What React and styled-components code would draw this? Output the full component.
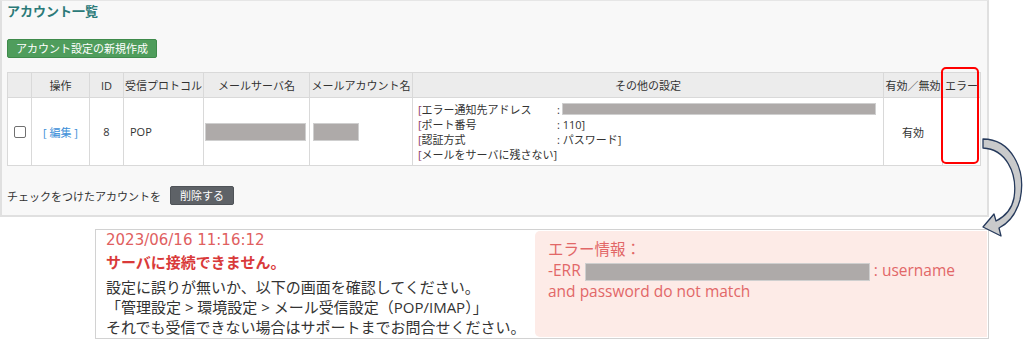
import styled, { createGlobalStyle } from 'styled-components'

// アカウント一覧のエラー表示を説明する画面
const GlobalStyle = createGlobalStyle`
    body {
        margin: 0;
        background: #ffffff;
        font-family: "Open Sans", "Noto Sans CJK JP", sans-serif;
        color: #333333;
    }
`

const columns = [
    { label: '', width: 24 },
    { label: '操作', width: 58 },
    { label: 'ID', width: 34 },
    { label: '受信プロトコル', width: 80 },
    { label: 'メールサーバ名', width: 106 },
    { label: 'メールアカウント名', width: 103 },
    { label: 'その他の設定', width: 471 },
    { label: '有効／無効', width: 59 },
    { label: 'エラー', width: 38 },
]

// value が null のときは伏せ字のバーを出す
const settings = [
    { label: 'エラー通知先アドレス', value: null },
    { label: 'ポート番号', value: '110]' },
    { label: '認証方式', value: 'パスワード]' },
]

const App = () => {
    return (
        <StyledPage>
            <GlobalStyle />
            <StyledPanel>
                <StyledTitle>アカウント一覧</StyledTitle>
                <StyledButton $tone="green">アカウント設定の新規作成</StyledButton>
                <StyledTableWrap>
                    <StyledTable>
                        <colgroup>
                            {columns.map((c, i) => (
                                <col key={i} style={{ width: c.width }} />
                            ))}
                        </colgroup>
                        <thead>
                            <tr>
                                {columns.map((c, i) => (
                                    <StyledTh key={i}>{c.label}</StyledTh>
                                ))}
                            </tr>
                        </thead>
                        <tbody>
                            <tr>
                                <StyledTd $align="center">
                                    <StyledCheck type="checkbox" />
                                </StyledTd>
                                <StyledTd $align="center">
                                    <StyledLink>[ 編集 ]</StyledLink>
                                </StyledTd>
                                <StyledTd $align="center">8</StyledTd>
                                <StyledTd $pad="6px">POP</StyledTd>
                                <StyledTd $pad="1px">
                                    <StyledMask $w={101} $h={18} />
                                </StyledTd>
                                <StyledTd $pad="3px">
                                    <StyledMask $w={46} $h={18} />
                                </StyledTd>
                                <StyledTd $pad="5px">
                                    <StyledSettings>
                                        {settings.map((s, i) => (
                                            <StyledSettingRow key={i}>
                                                <span><StyledBracket>[</StyledBracket>{s.label}</span>
                                                <StyledValue>
                                                    : {s.value === null ? <StyledMask $w={314} $h={12} /> : s.value}
                                                </StyledValue>
                                            </StyledSettingRow>
                                        ))}
                                        <div><StyledBracket>[</StyledBracket>メールをサーバに残さない]</div>
                                    </StyledSettings>
                                </StyledTd>
                                <StyledTd $align="center">有効</StyledTd>
                                <StyledTd />
                            </tr>
                        </tbody>
                    </StyledTable>
                    <StyledHighlight />
                </StyledTableWrap>
                <StyledFooter>
                    <span>チェックをつけたアカウントを</span>
                    <StyledButton $tone="grey">削除する</StyledButton>
                </StyledFooter>
            </StyledPanel>

            <StyledErrorBox>
                <StyledErrorMain>
                    <StyledDate>2023/06/16 11:16:12</StyledDate>
                    <StyledErrorTitle>サーバに接続できません。</StyledErrorTitle>
                    <StyledMessage>
                        設定に誤りが無いか、以下の画面を確認してください。<br />
                        「管理設定 &gt; 環境設定 &gt; メール受信設定（POP/IMAP）」<br />
                        それでも受信できない場合はサポートまでお問合せください。
                    </StyledMessage>
                </StyledErrorMain>
                <StyledErrorInfo>
                    エラー情報：<br />
                    -ERR <StyledMask $w={285} $h={18} $inline /> : username<br />
                    and password do not match
                </StyledErrorInfo>
            </StyledErrorBox>

            <StyledArrow viewBox="0 0 54 112" width="54" height="112">
                <path
                    d="M13,9 C40,9 57,38 50,70 C46,84 39,93 29,98 L31,106 L13,97 L24,84 L26,91 C36,86 42,78 44,68 C48,42 35,19 13,18 Z"
                    fill="#c9cacb"
                    stroke="#263a5c"
                    strokeWidth="1.3"
                    strokeLinejoin="round"
                />
            </StyledArrow>
        </StyledPage>
    )
}

export default App

const StyledPage = styled.div`
    position: relative;
    width: 1024px;
    height: 341px;
    overflow: hidden;
`

const StyledPanel = styled.section`
    box-sizing: border-box;
    width: 989px;
    height: 217px;
    padding: 2px 5px 0 5px;
    background: #f8f8f8;
    border: 2px solid #e0e0e0;
    border-top: 1px solid #e6e6e6;
    font-size: 11px;
`

const StyledTitle = styled.h2`
    margin: 0;
    font-family: "Noto Sans CJK JP", sans-serif;
    font-size: 13px;
    line-height: 16px;
    font-weight: bold;
    color: #2b7a78;
`

const StyledButton = styled.button`
    display: inline-flex;
    align-items: center;
    box-sizing: border-box;
    height: 19px;
    padding: 0 ${({ $tone }) => ($tone === 'green' ? '8px' : '9px')};
    margin-top: ${({ $tone }) => ($tone === 'green' ? '20px' : '0')};
    border: 1px solid ${({ $tone }) => ($tone === 'green' ? '#3f8a4b' : '#4f5358')};
    border-radius: 2px;
    background: ${({ $tone }) => ($tone === 'green' ? '#4f9d5c' : '#5e6267')};
    color: #ffffff;
    font-family: "Noto Sans CJK JP", sans-serif;
    font-size: 11px;
    line-height: 1;
`

const StyledTableWrap = styled.div`
    position: relative;
    margin-top: 14px;
    width: 973px;
`

const StyledTable = styled.table`
    width: 973px;
    table-layout: fixed;
    border-collapse: collapse;
    background: #ffffff;
    font-size: 11px;
    color: #333333;
`

const StyledTh = styled.th`
    height: 24px;
    padding: 0;
    background: #ececec;
    border: 1px solid #d9d9d9;
    font-weight: normal;
    white-space: nowrap;
    text-align: center;
`

const StyledTd = styled.td`
    height: 67px;
    padding: 0 ${({ $pad }) => $pad || '0'};
    border: 1px solid #d9d9d9;
    text-align: ${({ $align }) => $align || 'left'};
    vertical-align: middle;
    white-space: nowrap;
`

const StyledCheck = styled.input`
    appearance: none;
    display: block;
    margin: 0 auto;
    width: 12px;
    height: 12px;
    border: 1px solid #707070;
    border-radius: 2px;
    background: #ffffff;
`

const StyledLink = styled.span`
    color: #3d8fd8;
`

const StyledMask = styled.span`
    display: ${({ $inline }) => ($inline ? 'inline-block' : 'block')};
    box-sizing: border-box;
    width: ${({ $w }) => $w}px;
    height: ${({ $h }) => $h}px;
    background: #aeaaa9;
    border: 1px solid #cfcfcf;
    vertical-align: middle;
`

const StyledSettings = styled.div`
    display: flex;
    flex-direction: column;
    line-height: 15px;
`

const StyledSettingRow = styled.div`
    display: grid;
    grid-template-columns: 139px 1fr;
    align-items: center;
`

const StyledValue = styled.span`
    display: flex;
    align-items: center;
    gap: 2px;
`

const StyledBracket = styled.span`
    color: #8c3a5e;
`

const StyledHighlight = styled.div`
    position: absolute;
    left: 934px;
    top: -5px;
    box-sizing: border-box;
    width: 38px;
    height: 97px;
    border: 2px solid #ff0000;
    border-radius: 5px;
`

const StyledFooter = styled.div`
    display: flex;
    align-items: center;
    gap: 9px;
    margin-top: 20px;
    font-family: "Noto Sans CJK JP", sans-serif;
    color: #333333;
`

const StyledErrorBox = styled.div`
    box-sizing: border-box;
    display: grid;
    grid-template-columns: 439px 1fr;
    margin: 12px 0 0 95px;
    width: 894px;
    height: 110px;
    border: 1px solid #d2d2d2;
    background: #ffffff;
`

const StyledErrorMain = styled.div`
    padding: 0 0 0 10px;
    font-size: 15px;
    line-height: 20px;
`

const StyledDate = styled.div`
    font-family: "DejaVu Sans", sans-serif;
    color: #e0605f;
`

const StyledErrorTitle = styled.div`
    margin-top: 2px;
    font-weight: bold;
    color: #d93a3a;
`

const StyledMessage = styled.div`
    margin-top: 5px;
    color: #333333;
`

const StyledErrorInfo = styled.div`
    margin: 1px 1px 1px 0;
    padding: 8px 10px 0 13px;
    background: #fdebe7;
    border-radius: 5px 0 0 5px;
    font-size: 15.5px;
    line-height: 21px;
    color: #e26767;
`

const StyledArrow = styled.svg`
    position: absolute;
    left: 970px;
    top: 130px;
`
